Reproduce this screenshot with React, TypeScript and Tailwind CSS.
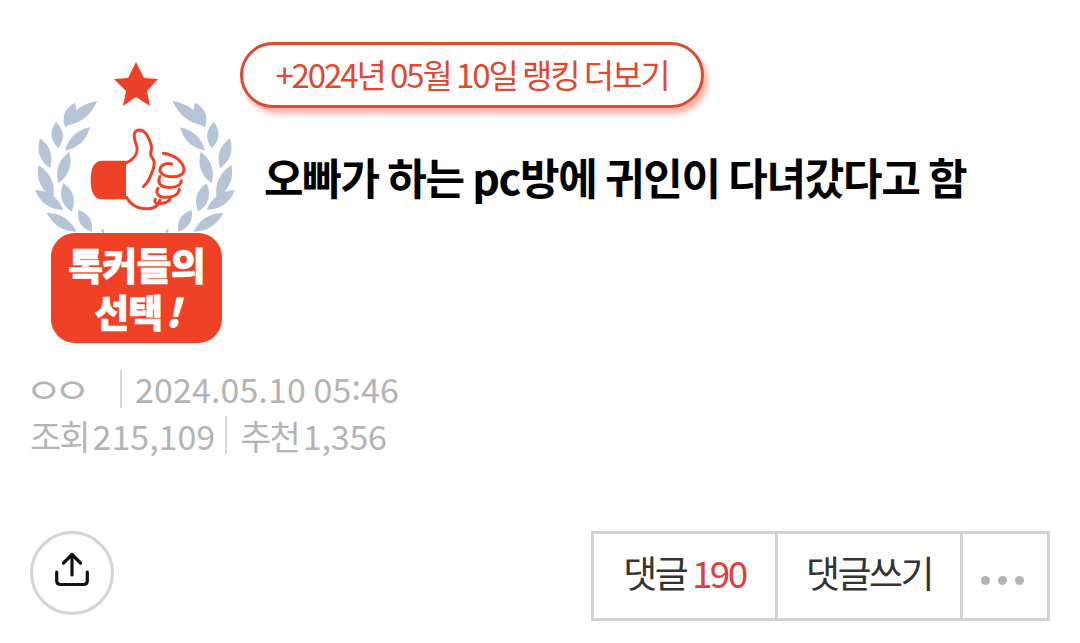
const FONT = "font-['Noto_Sans_CJK_KR','Noto_Sans',sans-serif]";

const LEAVES: [number, number, number, number, number][] = [
  [232, 183, 135, 258, 34], [165, 188, 135, 262, 34], [210, 262, 135, 332, 32],
  [108, 245, 115, 325, 34], [60, 295, 90, 385, 34], [148, 335, 115, 430, 34],
  [55, 375, 100, 475, 36], [130, 430, 155, 515, 36], [45, 450, 130, 510, 34],
  [80, 518, 170, 575, 32], [175, 510, 215, 575, 32], [100, 585, 190, 592, 14], [245, 566, 252, 580, 8],
];

function leafPath(x1: number, y1: number, x2: number, y2: number, w: number) {
  const mx = (x1 + x2) / 2, my = (y1 + y2) / 2;
  const dx = x2 - x1, dy = y2 - y1, l = Math.hypot(dx, dy);
  const nx = (-dy / l) * w, ny = (dx / l) * w;
  return `M${x1} ${y1}Q${mx + nx} ${my + ny} ${x2} ${y2}Q${mx - nx} ${my - ny} ${x1} ${y1}Z`;
}

function Logo() {
  return (
    <div className="w-[210px] shrink-0">
      <svg width="210" height="178" viewBox="30 55 210 178" className="block">
        <g transform="translate(20 40) scale(.3333)">
          {LEAVES.map((l, i) => (
            <g key={i} fill="#b5c5d7">
              <path d={leafPath(l[0], l[1], l[2], l[3], l[4])} />
              <path d={leafPath(690 - l[0], l[1], 690 - l[2], l[3], l[4])} />
            </g>
          ))}
        </g>
        <polygon fill="#ec4128" points="136,62 144,78 158,79 147,91 150,106 136,97 123,106 126,91 114,79 128,78" />
        <g transform="translate(80 120) scale(.3333)">
          <path d="M138 122H66C42 122 32 145 32 180S42 238 66 238H138Z" fill="#ee4126" />
          <g fill="none" stroke="#ee4126" strokeWidth="9" strokeLinecap="round" strokeLinejoin="round">
            <path d="M140 128C160 118 176 100 170 78C160 50 158 32 178 30C198 30 208 55 214 78C218 95 205 100 216 112C228 125 222 145 214 162C208 178 200 192 190 200" />
            <path d="M140 232C152 255 175 267 205 266C222 265 235 258 240 240" />
            <path d="M250 100C285 105 310 125 312 148C312 165 295 172 270 170C252 168 238 160 240 148C242 135 258 128 275 132" />
            <path d="M240 170C232 185 238 200 262 202C285 204 304 196 304 182" />
            <path d="M234 205C225 222 236 232 258 232C278 232 296 225 298 208" />
            <path d="M226 238C220 250 232 252 246 250C262 248 272 240 270 232" />
          </g>
        </g>
      </svg>
      <div className="ml-[21px] w-[171px] h-[110px] rounded-[24px] bg-[#ee4126] pt-[7px] flex flex-col items-center text-white text-[38px] leading-[47px] font-black tracking-[-0.8px] [-webkit-text-stroke:0.6px_white] whitespace-nowrap">
        <div>톡커들의</div>
        <div className="flex pl-[1px]">선택<div className="italic ml-[3px]">!</div></div>
      </div>
    </div>
  );
}

export default function App() {
  return (
    <div className={`${FONT} w-[1080px] h-[643px] bg-white overflow-hidden pl-[30px] pt-[42px] flex flex-col`}>
      <div className="flex h-[303px]">
        <div className="pt-[13px] shrink-0"><Logo /></div>
        <div className="flex flex-col items-start">
          <div className="h-[66px] w-[464px] rounded-[33px] border-[3px] border-[#e0482f] bg-white shadow-[4px_6px_5px_#fbb5aa] flex items-center justify-center text-[33px] tracking-[-2.1px] text-[#e0482f]">
            +2024년 05월 10일 랭킹 더보기
          </div>
          <div className="mt-[38px] ml-[24px] text-[43px] leading-[60px] font-bold tracking-[-1.3px] text-black whitespace-nowrap">
            오빠가 하는 pc방에 귀인이 다녀갔다고 함
          </div>
        </div>
      </div>
      <div className="mt-[19px] flex items-center h-[49px] text-[34px] text-[#b4b4b4] whitespace-nowrap">
        <span className="w-[90px]"><span className="inline-block -ml-[5px] origin-left scale-x-[1.2] tracking-[-7.5px]">ㅇㅇ</span></span>
        <span className="w-[2px] h-[38px] bg-[#d8d8d8]" />
        <span className="ml-[13px] tracking-[0.1px]">2024.05.10 05<span className="inline-block -translate-y-[3px]">:</span>46</span>
      </div>
      <div className="-mt-[2px] flex items-center h-[48px] text-[34px] text-[#b4b4b4] whitespace-nowrap">
        <span className="tracking-[-2px]">조회</span>
        <span className="ml-[4px]">215,109</span>
        <span className="ml-[10px] w-[2px] h-[38px] bg-[#d8d8d8]" />
        <span className="ml-[13px] tracking-[-2px]">추천</span>
        <span className="ml-[4px] tracking-[-0.2px]">1,356</span>
      </div>
      <div className="mt-[72px] flex items-start justify-between pr-[30px]">
        <div className="w-[84px] h-[84px] rounded-full border-[3px] border-[#d4d4d4] flex items-center justify-center">
          <svg width="36" height="36" viewBox="0 0 36 36" fill="none" stroke="#111" strokeWidth="3.2" strokeLinecap="round" strokeLinejoin="round" className="overflow-visible">
            <path d="M18 -0.5V20M9.5 8L18 -0.5L26.5 8" />
            <path d="M2.7 17V26C2.7 28 4.2 29.5 6.7 29.5H29.3C31.8 29.5 33.3 28 33.3 26V17" />
          </svg>
        </div>
        <div className="flex h-[90px] w-[459px] border-[3px] border-[#d2d2d2] text-[37px] tracking-[-2.6px] text-[#333]">
          <div className="w-[184px] pb-[6px] flex items-center justify-center border-r-[3px] border-[#d2d2d2] whitespace-nowrap">
            댓글&nbsp;<span className="text-[#e03e3a]">190</span>
          </div>
          <div className="w-[185px] pb-[6px] flex items-center justify-center border-r-[3px] border-[#d2d2d2] whitespace-nowrap">댓글쓰기</div>
          <div className="flex-1 pt-[9px] pr-[5px] flex items-center justify-center gap-[8px]">
            <span className="w-[9px] h-[9px] rounded-full bg-[#b3b3b3]" />
            <span className="w-[9px] h-[9px] rounded-full bg-[#b3b3b3]" />
            <span className="w-[9px] h-[9px] rounded-full bg-[#b3b3b3]" />
          </div>
        </div>
      </div>
    </div>
  );
}
